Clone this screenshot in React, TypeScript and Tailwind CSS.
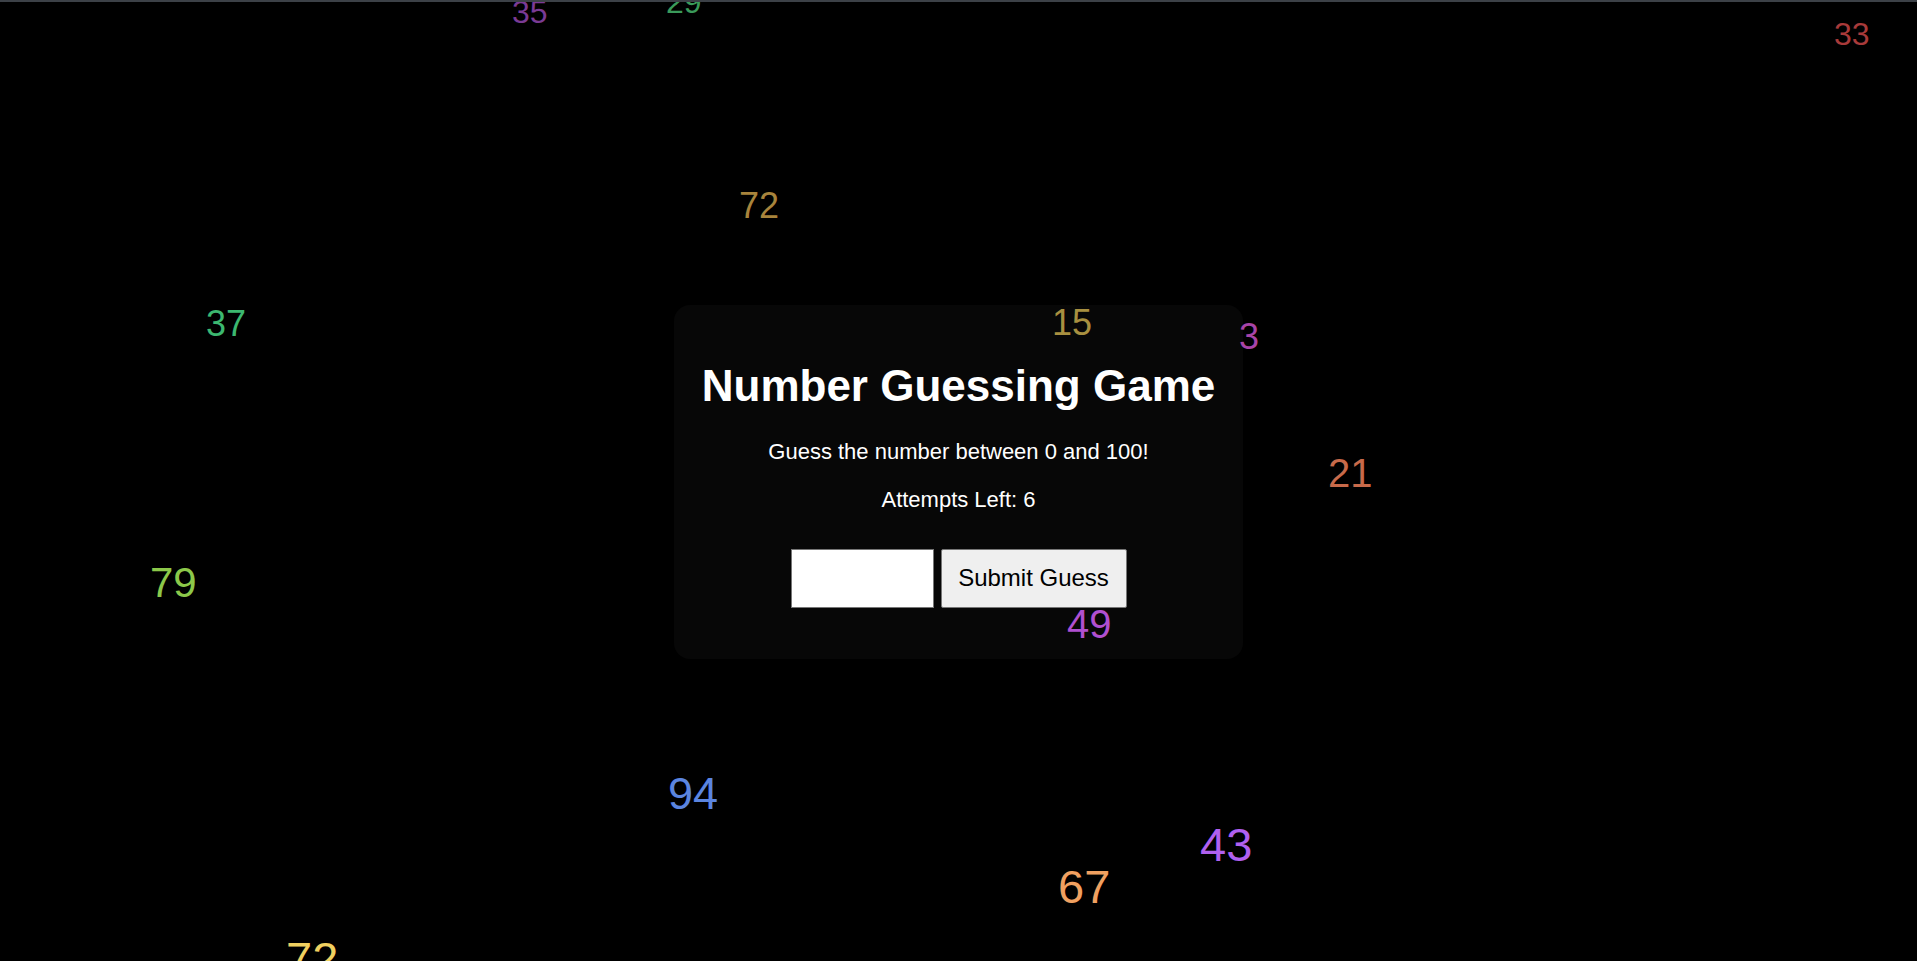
import React, { useState } from "react"

type Floater = { n: number; x: number; y: number; size: number; color: string }

// numbers drifting behind/over the game card
const floaters: Floater[] = [
  { n: 35, x: 512, y: -4, size: 32, color: "#7a3a94" },
  { n: 29, x: 666, y: -14, size: 32, color: "#3a9a5a" },
  { n: 72, x: 739, y: 188, size: 36, color: "#a8843c" },
  { n: 33, x: 1834, y: 18, size: 32, color: "#a83a3a" },
  { n: 37, x: 206, y: 306, size: 36, color: "#3cb870" },
  { n: 79, x: 150, y: 562, size: 42, color: "#8cc84a" },
  { n: 3, x: 1239, y: 319, size: 36, color: "#a844a8" },
  { n: 21, x: 1328, y: 453, size: 40, color: "#c86a4a" },
  { n: 15, x: 1052, y: 305, size: 36, color: "#a89040" },
  { n: 49, x: 1067, y: 604, size: 40, color: "#b050d0" },
  { n: 94, x: 668, y: 771, size: 45, color: "#5b85e0" },
  { n: 72, x: 286, y: 935, size: 47, color: "#f0d060" },
  { n: 67, x: 1058, y: 863, size: 47, color: "#f0a060" },
  { n: 43, x: 1200, y: 821, size: 47, color: "#b060f0" },
]

export default function App() {
  const [guess, setGuess] = useState("")
  const [attempts] = useState(6)

  return (
    <div className="relative w-full h-[961px] overflow-hidden bg-black border-t-2 border-[#3c4147] font-['Liberation_Sans',Arial,sans-serif] text-white">
      <div className="flex h-full items-center justify-center">
        <div className="w-[569px] h-[354px] rounded-2xl bg-[#070707] flex flex-col items-center pt-[55px]">
          <h1 className="text-[44px] font-bold leading-[52px]">Number Guessing Game</h1>
          <p className="mt-[27px] text-[22px] leading-[25px]">Guess the number between 0 and 100!</p>
          <p className="mt-[23px] text-[22px] leading-[25px]">Attempts Left: {attempts}</p>
          <div className="mt-[37px] flex gap-[7px]">
            <input
              type="number"
              value={guess}
              onChange={(e: any) => setGuess(e.target.value)}
              className="w-[143px] h-[59px] bg-white text-black text-[24px] px-2 border border-[#767676] outline-none"
            />
            <button className="w-[186px] h-[59px] bg-[#efefef] text-black text-[24px] border border-[#767676] rounded-[2px]">
              Submit Guess
            </button>
          </div>
        </div>
      </div>
      {floaters.map((f, i) => (
        <span
          key={i}
          className="absolute leading-none pointer-events-none"
          style={{ left: f.x, top: f.y - 2, fontSize: f.size, color: f.color }}
        >
          {f.n}
        </span>
      ))}
    </div>
  )
}
